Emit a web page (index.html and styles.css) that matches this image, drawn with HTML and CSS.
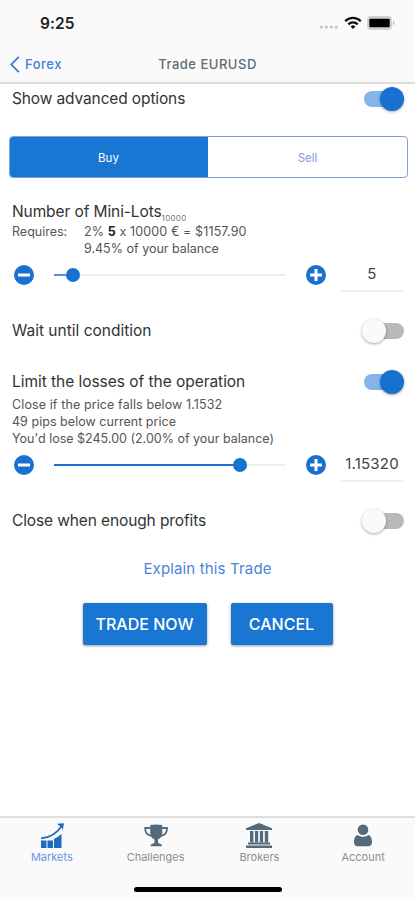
FILE: index.html
```html
<!DOCTYPE html>
<html lang="en">
<head>
    <meta charset="UTF-8">
    <meta name="viewport" content="width=device-width, initial-scale=1.0">
    <title>Trade EURUSD</title>
    <link rel="stylesheet" href="styles.css">
</head>
<body>
    <div class="wrap">
        <div class="status">
            <span class="time">9:25</span>
            <div class="status-icons">
                <svg class="dots" width="20" height="4" viewBox="0 0 20 4" fill="#c3c3c3">
                    <circle cx="2.3" cy="2" r="1.6"/><circle cx="7.3" cy="2" r="1.6"/><circle cx="12.3" cy="2" r="1.6"/><circle cx="17.3" cy="2" r="1.6"/>
                </svg>
                <svg class="wifi" width="18" height="14" viewBox="0 0 18 14" fill="none" stroke="#111" stroke-width="2.3">
                    <path d="M1.2 5.2a11 11 0 0 1 15.6 0"/>
                    <path d="M4.3 8.4a6.7 6.7 0 0 1 9.4 0"/>
                    <path d="M9 13L6.6 10.5a3.4 3.4 0 0 1 4.8 0z" fill="#111" stroke="none"/>
                </svg>
                <svg class="battery" width="28" height="14" viewBox="0 0 28 14">
                    <rect x="0" y="0" width="25" height="14" rx="4" fill="#d2d2d2"/>
                    <rect x="2.3" y="2.8" width="20.4" height="8.4" rx="1" fill="#000"/>
                    <path d="M26 4.6q3 2.4 0 4.8z" fill="#bbb"/>
                </svg>
            </div>
        </div>

        <div class="nav">
            <a class="back" href="#">
                <svg width="10" height="17" viewBox="0 0 10 17" fill="none" stroke="#2b78d6" stroke-width="1.7"><path d="M8.8 .8L1.3 8.5l7.5 7.7"/></svg>
                <span class="back-text">Forex</span>
            </a>
            <h1 class="title">Trade EURUSD</h1>
        </div>

        <div class="content">
            <div class="row row-advanced">
                <span class="label label-advanced">Show advanced options</span>
                <span class="toggle on"></span>
            </div>

            <div class="segment">
                <span class="seg seg-active">Buy</span>
                <span class="seg">Sell</span>
            </div>

            <div class="lots">
                <div class="label label-lots">Number of Mini-Lots<span class="unit">10000</span></div>
                <div class="requires">
                    <span class="requires-name">Requires:</span>
                    <div>
                        <div class="req-sum">2% <b>5</b> x 10000 € = $1157.90</div>
                        <div class="req-balance">9.45% of your balance</div>
                    </div>
                </div>
                <div class="slider">
                    <svg class="btn-round" width="20" height="20" viewBox="0 0 20 20"><circle cx="10" cy="10" r="10" fill="#1871d1"/><path d="M4 10h12" stroke="#fff" stroke-width="3"/></svg>
                    <div class="range">
                        <div class="range-fill range-fill-light" style="width: 8.4%"></div>
                        <div class="knob"></div>
                        <div class="range-rest"></div>
                    </div>
                    <svg class="btn-round" width="20" height="20" viewBox="0 0 20 20"><circle cx="10" cy="10" r="10" fill="#1871d1"/><path d="M4 10h12M10 4v12" stroke="#fff" stroke-width="3"/></svg>
                    <div class="value">5</div>
                </div>
            </div>

            <div class="row row-wait">
                <span class="label">Wait until condition</span>
                <span class="toggle"></span>
            </div>

            <div class="row row-limit">
                <span class="label label-limit">Limit the losses of the operation</span>
                <span class="toggle on"></span>
            </div>
            <div class="info">
                <div class="info-price">Close if the price falls below 1.1532</div>
                <div class="info-pips">49 pips below current price</div>
                <div>You'd lose $245.00 (2.00% of your balance)</div>
            </div>
            <div class="slider">
                <svg class="btn-round" width="20" height="20" viewBox="0 0 20 20"><circle cx="10" cy="10" r="10" fill="#1871d1"/><path d="M4 10h12" stroke="#fff" stroke-width="3"/></svg>
                <div class="range">
                    <div class="range-fill" style="width: 80.5%"></div>
                    <div class="knob"></div>
                    <div class="range-rest"></div>
                </div>
                <svg class="btn-round" width="20" height="20" viewBox="0 0 20 20"><circle cx="10" cy="10" r="10" fill="#1871d1"/><path d="M4 10h12M10 4v12" stroke="#fff" stroke-width="3"/></svg>
                <div class="value">1.15320</div>
            </div>

            <div class="row row-profit">
                <span class="label label-profit">Close when enough profits</span>
                <span class="toggle"></span>
            </div>

            <a class="explain" href="#">Explain this Trade</a>

            <div class="buttons">
                <div class="btn btn-trade">TRADE NOW</div>
                <div class="btn btn-cancel">CANCEL</div>
            </div>
        </div>

        <div class="tabs">
            <div class="tab tab-active">
                <svg width="26" height="26" viewBox="0 0 26 26" fill="#1f6bc4">
                    <path d="M2 17.500h5.500V25H2zM8.500 17.500H14V25H8.500zM15 16l3.500-2 4-3V25H15z"/>
                    <path d="M2 15.300C10 14.800 18 10.500 23 2.500" fill="none" stroke="#1f6bc4" stroke-width="1.700"/>
                    <path d="M18 .8L25 .2l-1.200 6.800-1.600-2.800z"/>
                </svg>
                <span>Markets</span>
            </div>
            <div class="tab">
                <svg width="26" height="26" viewBox="0 0 26 26" fill="#54697a">
                    <path d="M7.200 2q6-1.200 12 0v8.300c0 3.200-2 5.200-4.200 6v3c0 1.400 4 1.200 4 3.900H7.500c0-2.700 4-2.500 4-3.900v-3c-2.300-.8-4.300-2.800-4.300-6z"/>
                    <path d="M7.400 5H2.200c-.2 4.600 2.200 7.200 6.300 7.900M19 5h5c.2 4.600-2.200 7.200-6.300 7.900" fill="none" stroke="#54697a" stroke-width="1.800"/>
                </svg>
                <span>Challenges</span>
            </div>
            <div class="tab">
                <svg width="28" height="26" viewBox="0 0 28 26" fill="#54697a">
                    <path d="M14 0l13 5.300v1.700H1V5.300z"/>
                    <path d="M5 8h3.400v11.500H5zM10 8h3.200v11.500H10zM14.900 8h3.200v11.500h-3.200zM19.800 8h3.400v11.500h-3.400z"/>
                    <path d="M3 19.500h22v2H3zM1 22.500h26v2.500H1z"/>
                </svg>
                <span>Brokers</span>
            </div>
            <div class="tab">
                <svg width="26" height="26" viewBox="0 0 26 26" fill="#54697a">
                    <circle cx="13" cy="6.800" r="5.300"/>
                    <path d="M7.500 12c3.200 2.400 7.800 2.400 11 0 2.500.6 3.500 4 3.500 7.200 0 2.600-1.500 4-3.500 4h-11c-2 0-3.500-1.400-3.500-4 0-3.200 1-6.600 3.500-7.200z"/>
                </svg>
                <span>Account</span>
            </div>
        </div>
        <div class="home"></div>
    </div>
</body>
</html>
```
FILE: styles.css
```css
*{ margin: 0; padding: 0; box-sizing: border-box;}
body{ background: #fff; color: #333; font-family: Inter, "Liberation Sans", sans-serif; overflow: hidden;}
a{ text-decoration: none;}
svg{ display: block; flex: none;}
.wrap{ width: 415px; height: 900px; display: flex; flex-direction: column;}

/* header */
.status{ height: 46px; padding: 0 20px 0 40px; display: flex; align-items: center; justify-content: space-between; background: #fafafa;}
.time{ font-size: 15.5px; font-weight: 600; color: #222; letter-spacing: .1px;}
.status-icons{ display: flex; align-items: center;}
.dots{ margin: 8px 5px 0 0;}
.battery{ margin-left: 5px;}
.nav{ height: 38px; padding: 0 10px; background: #fafafa; border-bottom: 2px solid #dcdcdc; display: grid; grid-template-columns: 1fr auto 1fr; align-items: center;}
.back{ display: flex; align-items: center; gap: 5px; color: #3f7fde; font-size: 13px; font-weight: 500; letter-spacing: .5px;}
.title{ font-size: 13px; font-weight: 500; color: #5c6c76; letter-spacing: .5px;}

/* form */
.content{ flex: 1; padding: 0 12px;}
.row{ display: flex; align-items: center; justify-content: space-between; height: 30px;}
.label{ font-size: 15.5px; line-height: 20px; white-space: nowrap;}
.label-advanced{ letter-spacing: -.13px;}
.label-limit{ letter-spacing: -.04px;}
.label-profit{ letter-spacing: -.12px;}
.label-lots{ letter-spacing: -.1px;}
.toggle{ width: 42px; height: 24px; margin-right: -1px; display: flex; align-items: center; position: relative;}
.toggle::before{ content: ""; width: 40px; height: 16px; margin-left: 2px; border-radius: 8px; background: #b9b9b9;}
.toggle::after{ content: ""; position: absolute; left: 0; top: 0; width: 24px; height: 24px; border-radius: 50%; background: #fafafa; box-shadow: 0 1px 3px rgba(0,0,0,.35);}
.toggle.on::before{ background: #83b5e8;}
.toggle.on::after{ left: 18px; background: #1871d1;}

.segment{ display: flex; height: 42px; margin: 22px -5px 0 -3px; border: 1px solid #7f9fe0; border-radius: 4px; overflow: hidden;}
.seg{ flex: 1; display: flex; align-items: center; justify-content: center; padding-top: 1px; font-size: 11.5px; color: #7f97dc;}
.seg-active{ background: #1976d2; color: #fff; margin: -1px 0 -1px -1px;}

.lots{ padding-top: 24px;}
.unit{ font-size: 8px; line-height: 8px; color: #777; letter-spacing: .3px; position: relative; top: 4px;}
.requires{ display: flex; padding-top: 1px; font-size: 12.5px; line-height: 17px; color: #555; white-space: nowrap;}
.requires-name{ width: 72px;}
.req-sum{ letter-spacing: .12px;}
.requires b{ color: #222;}
.slider{ display: flex; align-items: center; height: 35px; padding-left: 2px;}
.range{ width: 231px; margin: 0 21px 0 20px; display: flex; align-items: center;}
.range-fill{ height: 2px; background: #1871d1;}
.range-fill-light{ background: #5590dc;}
.knob{ width: 14px; height: 14px; margin: 0 -7px; border-radius: 50%; background: #1871d1; flex: none; z-index: 1;}
.range-rest{ flex: 1; height: 2px; background: #ececec;}
.value{ width: 62px; height: 35px; margin-left: 15px; border-bottom: 2px solid #eee; line-height: 34px; text-align: center; font-size: 15px; letter-spacing: .2px; color: #444; flex: none;}
.row-wait{ margin-top: 24px;}
.row-limit{ margin-top: 21px;}
.info{ margin-top: -1px; font-size: 12.5px; line-height: 17px; color: #555; white-space: nowrap;}
.info-price{ letter-spacing: .11px;}
.info-pips{ letter-spacing: .04px;}
.row-profit{ margin-top: 24px;}
.explain{ display: block; margin-top: 23px; text-align: center; font-size: 15px; line-height: 20px; letter-spacing: .15px; color: #4b83da;}
.buttons{ display: flex; justify-content: center; gap: 24px; margin-top: 24px;}
.btn{ height: 42px; border-radius: 2px; background: #1976d2; color: #fff; font-size: 16px; font-weight: 500; display: flex; align-items: center; justify-content: center; box-shadow: 0 1px 3px rgba(0,0,0,.4);}
.btn-trade{ width: 124px;}
.btn-cancel{ width: 102px;}

/* footer */
.tabs{ height: 68px; border-top: 2px solid #dedede; background: #fafafa; display: flex; padding-top: 5px;}
.tab{ flex: 1; display: flex; flex-direction: column; align-items: center; color: #8a8f94; font-size: 11px; line-height: 14px; gap: 1px;}
.tab-active{ color: #6f92dc;}
.home{ height: 16px; background: #fafafa; display: flex; justify-content: center;}
.home::after{ content: ""; width: 148px; height: 5px; margin-top: 3px; border-radius: 3px; background: #000;}
```
